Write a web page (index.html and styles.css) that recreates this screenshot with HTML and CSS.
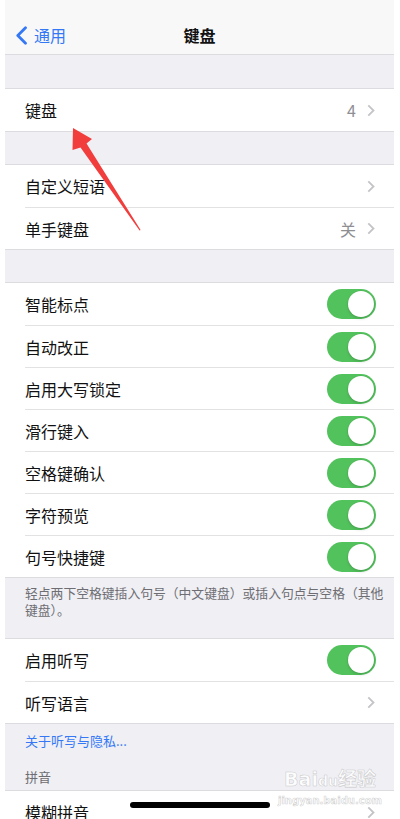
FILE: index.html
```html
<!DOCTYPE html>
<html lang="zh">
<head>
<meta charset="utf-8">
<link rel="stylesheet" href="styles.css">
</head>
<body>
<div class="screen">
  <header class="nav">
    <div class="back">
      <svg width="13" height="19" viewBox="0 0 13 19"><path d="M10.5 1.8 L2.8 9.5 L10.5 17.2" stroke="#3478f6" stroke-width="2.8" fill="none" stroke-linecap="round" stroke-linejoin="round"/></svg>
      <span>通用</span>
    </div>
    <div class="title">键盘</div>
    <div></div>
  </header>

  <section class="group g1">
    <div class="row"><div class="cell"><span class="label">键盘</span><span class="value">4</span><svg class="chev" width="8" height="13" viewBox="0 0 8 13"><path d="M1.3 1.3 L6.5 6.5 L1.3 11.7" stroke="#c4c4c8" stroke-width="1.8" fill="none"/></svg></div></div>
  </section>

  <section class="group g2">
    <div class="row"><div class="cell"><span class="label">自定义短语</span><svg class="chev" width="8" height="13" viewBox="0 0 8 13"><path d="M1.3 1.3 L6.5 6.5 L1.3 11.7" stroke="#c4c4c8" stroke-width="1.8" fill="none"/></svg></div></div>
    <div class="row"><div class="cell"><span class="label">单手键盘</span><span class="value">关</span><svg class="chev" width="8" height="13" viewBox="0 0 8 13"><path d="M1.3 1.3 L6.5 6.5 L1.3 11.7" stroke="#c4c4c8" stroke-width="1.8" fill="none"/></svg></div></div>
  </section>

  <section class="group g3">
    <div class="row"><div class="cell"><span class="label">智能标点</span><span class="toggle"></span></div></div>
    <div class="row"><div class="cell"><span class="label">自动改正</span><span class="toggle"></span></div></div>
    <div class="row"><div class="cell"><span class="label">启用大写锁定</span><span class="toggle"></span></div></div>
    <div class="row"><div class="cell"><span class="label">滑行键入</span><span class="toggle"></span></div></div>
    <div class="row"><div class="cell"><span class="label">空格键确认</span><span class="toggle"></span></div></div>
    <div class="row"><div class="cell"><span class="label">字符预览</span><span class="toggle"></span></div></div>
    <div class="row"><div class="cell"><span class="label">句号快捷键</span><span class="toggle"></span></div></div>
  </section>
  <p class="footnote">轻点两下空格键插入句号（中文键盘）或插入句点与空格（其他<br>键盘）。</p>

  <section class="group g4">
    <div class="row"><div class="cell"><span class="label">启用听写</span><span class="toggle"></span></div></div>
    <div class="row"><div class="cell"><span class="label">听写语言</span><svg class="chev" width="8" height="13" viewBox="0 0 8 13"><path d="M1.3 1.3 L6.5 6.5 L1.3 11.7" stroke="#c4c4c8" stroke-width="1.8" fill="none"/></svg></div></div>
  </section>
  <p class="link">关于听写与隐私...</p>
  <p class="section-head">拼音</p>

  <section class="group g5">
    <div class="row"><div class="cell"><span class="label">模糊拼音</span><svg class="chev" width="8" height="13" viewBox="0 0 8 13"><path d="M1.3 1.3 L6.5 6.5 L1.3 11.7" stroke="#c4c4c8" stroke-width="1.8" fill="none"/></svg></div></div>
  </section>

  <svg class="arrow" width="400" height="819" viewBox="0 0 400 819">
    <polygon points="73,128 92,139 86.5,143.5 140.6,230 139.6,230.4 80.5,147.5 72.5,150" fill="#f23d3d"/>
  </svg>
  <div class="watermark">
    <div class="wm-big">Bai<span class="wm-du">du</span>经验</div>
    <div class="wm-small">jingyan.baidu.com</div>
  </div>
  <div class="home"></div>
</div>
</body>
</html>
```

FILE: styles.css
```css
* { box-sizing: border-box; }
html, body {
  margin: 0;
  padding: 0;
  background: #ffffff;
  overflow: hidden;
}
body {
  font-family: "Noto Sans CJK SC", "Noto Sans", sans-serif;
  color: #111111;
}
.screen {
  position: relative;
  margin-left: 5px;
  width: 389px;
  height: 819px;
  overflow: hidden;
  background: #efeff4;
}
.nav {
  display: grid;
  grid-template-columns: 1fr auto 1fr;
  grid-template-rows: 40px;
  align-items: center;
  height: 55px;
  padding-top: 15px;
  background: #f8f8f9;
  border-bottom: 1px solid #dcdce0;
}
.back {
  display: flex;
  align-items: center;
  gap: 6px;
  padding-left: 10px;
  color: #3478f6;
  font-size: 16px;
  line-height: 20px;
}
.back svg { display: block; }
.title {
  font-size: 16px;
  font-weight: 700;
  line-height: 20px;
}
.group {
  background: #ffffff;
  border-top: 1px solid #dcdce0;
  border-bottom: 1px solid #dcdce0;
}
.g1 { margin-top: 33px; }
.g2 { margin-top: 32px; }
.g3 { margin-top: 32px; }
.g4 { margin-top: 0; }
.g5 { margin-top: 5px; }
.row {
  display: flex;
  height: 42px;
  padding-left: 20px;
}
.cell {
  flex: 1;
  display: flex;
  align-items: center;
  padding-right: 19px;
  border-top: 1px solid #e2e2e5;
}
.row:first-child .cell { border-top: none; }
.label {
  flex: 1;
  font-size: 16px;
  line-height: 20px;
}
.value {
  font-size: 16px;
  line-height: 20px;
  color: #8e8e93;
  margin-right: 11px;
}
.chev { display: block; }
.toggle {
  position: relative;
  width: 49px;
  height: 30px;
  border-radius: 15px;
  background: #52c25c;
  margin-right: -1px;
}
.toggle::after {
  content: "";
  position: absolute;
  right: 2px;
  top: 2px;
  width: 26px;
  height: 26px;
  border-radius: 50%;
  background: #ffffff;
  box-shadow: 0 0 0 0.5px rgba(0,0,0,0.08), 0 2px 3px rgba(0,0,0,0.12);
}
.footnote {
  margin: 0;
  padding: 6px 2px 20px 20px;
  height: 60px;
  font-size: 12.8px;
  line-height: 17px;
  color: #6d6d72;
}
.link {
  margin: 0;
  padding: 8px 20px 0 20px;
  font-size: 13px;
  line-height: 17px;
  color: #3478f6;
}
.section-head {
  margin: 19px 0 0 0;
  padding: 0 20px;
  font-size: 13px;
  line-height: 17px;
  color: #6d6d72;
}
.arrow {
  position: absolute;
  left: -5px;
  top: 0;
  pointer-events: none;
}
.watermark {
  position: absolute;
  left: 270px;
  top: 766px;
  width: 110px;
  text-align: center;
  white-space: nowrap;
  font-family: "DejaVu Sans", "Noto Sans CJK SC", sans-serif;
  color: rgba(255,255,255,0.85);
  -webkit-text-stroke: 0.6px rgba(150,150,150,0.45);
}
.wm-big {
  font-size: 19px;
  font-weight: 700;
  line-height: 26px;
}
.wm-du {
  font-size: 14px;
}
.wm-small {
  font-size: 10px;
  line-height: 13px;
  font-weight: 700;
}
.home {
  position: absolute;
  left: 125px;
  top: 802px;
  width: 140px;
  height: 6px;
  border-radius: 3px;
  background: #000000;
}
```
